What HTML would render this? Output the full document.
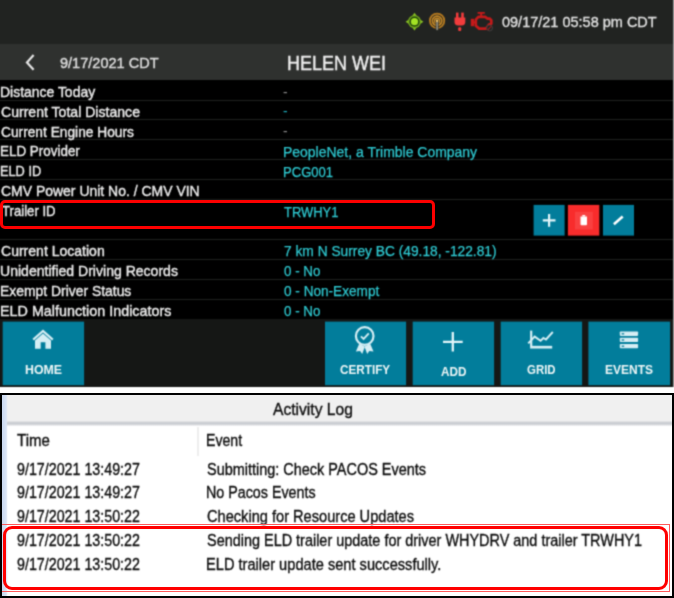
<!DOCTYPE html>
<html>
<head>
<meta charset="utf-8">
<title>ELD</title>
<style>
html,body{margin:0;padding:0;}
body{width:674px;height:598px;position:relative;overflow:hidden;background:#fff;font-family:"Liberation Sans",sans-serif;}
.abs{position:absolute;}
.blur{filter:url(#bl);}
#top{left:0;top:0;width:674px;height:391px;background:#fff;overflow:hidden;}
#loginner{left:2px;top:395px;width:670px;height:200.6px;background:#fff;overflow:hidden;}
#status{left:0;top:0;width:674px;height:44px;background:#212321;}
#header{left:0;top:44px;width:674px;height:36px;background:#2f312f;}
#rows{left:0;top:80px;width:674px;height:240px;background:#000;}
.sep{position:absolute;left:0;width:674px;height:1px;background:#1f211f;}
.t{position:absolute;white-space:nowrap;line-height:20px;height:20px;}
#bar{left:0;top:319px;width:674px;height:68px;background:#151715;}
.btn{position:absolute;top:321.5px;width:81.6px;height:63.7px;background:#027d9b;}
.sb{position:absolute;top:205px;width:31px;height:31px;background:#027d9b;}
</style>
</head>
<body>
<svg width="0" height="0" style="position:absolute"><filter id="bl" x="0" y="0" width="100%" height="100%" color-interpolation-filters="sRGB"><feConvolveMatrix order="3" kernelMatrix="0.0400 0.1200 0.0400 0.1200 0.3600 0.1200 0.0400 0.1200 0.0400" divisor="1" edgeMode="duplicate" preserveAlpha="true"/></filter></svg>
<div id="top" class="abs blur">
<div id="status" class="abs">
<svg class="abs" style="left:0;top:0" width="674" height="44" viewBox="0 0 674 44">
<g transform="translate(414.5 21.7)">
<path d="M0 -8.9 L2.3 -5.6 L-2.3 -5.6Z M0 8.9 L2.3 5.6 L-2.3 5.6Z M-8.9 0 L-5.6 2.3 L-5.6 -2.3Z M8.9 0 L5.6 2.3 L5.6 -2.3Z" fill="#8cc624"/>
<circle r="6.5" fill="#76aa1e"/>
<circle r="5.1" fill="#1f420c"/>
<circle r="3.6" fill="#a4e224"/>
</g>
<g transform="translate(437.1 20.8)" fill="none">
<circle r="7.2" stroke="#b87c20" stroke-width="1.8"/>
<circle r="4.7" stroke="#c88a26" stroke-width="1.7"/>
<circle r="2.5" stroke="#c88a26" stroke-width="1.4"/>
<rect x="-1.1" y="0" width="2.2" height="9.6" fill="#a8a494" stroke="#212321" stroke-width="0.8"/>
<circle r="1.3" fill="#f2c466"/>
</g>
<g fill="#f23c3c">
<rect x="456" y="12.6" width="2.5" height="6"/>
<rect x="461.2" y="12.6" width="2.6" height="6"/>
<path d="M454.5 17.4 H465.3 V22 Q465.3 25.4 461.6 25.4 H458.2 Q454.5 25.4 454.5 22Z"/>
<rect x="458.2" y="27.3" width="3" height="3.6" rx="1"/>
</g>
<g fill="none" stroke="#c41a1a" stroke-width="2.7" stroke-linejoin="round">
<path d="M477.6 12.9 H484.8" stroke-width="1.8"/><path d="M481.2 13 V16" stroke-width="2"/>
<path d="M475.8 19.6 L478.4 16.9 H485.4 L487.3 18.6 H489.6 L491.3 20.2 V23.8 L489 24.6 L486.2 28.6 H479.2 L475.8 25.8 Z"/>
<path d="M472.4 18.8 V26.2" stroke-width="3.2"/>
<path d="M472 22.4 H476" stroke-width="2.4"/>
</g>
<g transform="translate(489.6 28)">
<circle r="2.9" fill="#212321" stroke="#454040" stroke-width="1"/>
<path d="M-2 2 L2 -2" stroke="#8a2020" stroke-width="1.2"/>
</g>
</svg>
</div>
<div id="header" class="abs">
<svg class="abs" style="left:24px;top:9px" width="14" height="18" viewBox="0 0 14 18"><path d="M9.6 2 L3 9.4 L9.6 16.8" fill="none" stroke="#e6e6e6" stroke-width="2.2"/></svg>
</div>
<div id="rows" class="abs"></div>
<div class="sep" style="top:100px"></div>
<div class="sep" style="top:119px"></div>
<div class="sep" style="top:139px"></div>
<div class="sep" style="top:159px"></div>
<div class="sep" style="top:179px"></div>
<div class="sep" style="top:199px"></div>
<div class="sep" style="top:239px"></div>
<div class="sep" style="top:259px"></div>
<div class="sep" style="top:279px"></div>
<div class="sep" style="top:299px"></div>

<svg class="abs" style="left:530px;top:200px" width="110" height="40" viewBox="530 200 110 40">
<rect x="533.6" y="204.9" width="31" height="30.7" fill="#027d9b"/>
<rect x="567.9" y="204.9" width="31.4" height="30.7" fill="#f82c2c"/>
<rect x="575" y="211.8" width="17.8" height="17.6" fill="#f94040"/>
<rect x="603" y="204.9" width="31" height="30.7" fill="#027d9b"/>
<path d="M542.8 220.4 H555.5 M549.1 214 V226.8" stroke="#e4f6fa" stroke-width="2.2" fill="none"/>
<path d="M580.5 216.6 H587 V224.3 Q587 225.3 586 225.3 H581.5 Q580.5 225.3 580.5 224.3Z M582.3 215.1 H585.2 V216.2 H582.3Z" fill="#fff"/>
<path d="M613.9 224.2 L622.7 216.6" stroke="#fff" stroke-width="2.6" fill="none"/>
</svg>
<div id="bar" class="abs"></div>
<svg class="abs" style="left:0;top:319px" width="674" height="69" viewBox="0 319 674 69">
<g fill="#027d9b">
<rect x="2.7" y="321.6" width="81.4" height="63.6"/>
<rect x="325" y="321.6" width="81.1" height="63.6"/>
<rect x="412.7" y="321.6" width="81.4" height="63.6"/>
<rect x="500.7" y="321.6" width="81.4" height="63.6"/>
<rect x="588.4" y="321.6" width="81.7" height="63.6"/>
</g>
<!-- home -->
<g fill="#d6eef4">
<path d="M33.2 339.6 L43 331 L52.8 339.6" fill="none" stroke="#d6eef4" stroke-width="2.2"/>
<path d="M35 340.6 L43 333.6 L51 340.6 V348.7 H45.4 V342.2 H40.7 V348.7 H35Z"/>
</g>
<!-- certify -->
<g fill="none" stroke="#d6eef4">
<circle cx="364.7" cy="336" r="8.8" stroke-width="2.2"/>
<path d="M360.9 336.4 L363.6 339 L368.8 333.4" stroke-width="1.9"/>
</g>
<path d="M359.2 343.8 L355.9 351.5 L360.1 350.9 L362.2 354 L365 346.6 Z M370.2 343.8 L373.5 351.5 L369.3 350.9 L367.2 354 L364.4 346.6 Z" fill="#d6eef4"/>
<!-- add -->
<path d="M443 341.8 H462.7 M452.8 332 V351.5" stroke="#e4f6fa" stroke-width="2.3" fill="none"/>
<!-- grid -->
<g fill="none" stroke="#d6eef4">
<path d="M531.2 330.6 V346" stroke-width="2.2"/>
<path d="M530.1 347.2 H552.2" stroke-width="2.7"/>
<path d="M528.2 343.4 L534.7 336.6 L540.6 340.7 L543.4 338 L546 339.5 L552.8 332" stroke-width="1.9"/>
</g>
<!-- events -->
<g fill="#d6eef4">
<rect x="619.8" y="331.4" width="18.3" height="4.5" rx="0.8"/>
<rect x="619.8" y="337.7" width="18.3" height="4.4" rx="0.8"/>
<rect x="619.8" y="344" width="18.3" height="4.2" rx="0.8"/>
</g>
<g fill="#2b93ac">
<rect x="621.6" y="333" width="2.6" height="1.6"/>
<rect x="621.6" y="339.2" width="2.6" height="1.6"/>
<rect x="621.6" y="345.4" width="2.6" height="1.6"/>
</g>
</svg>
<div class="abs" style="left:673.1px;top:0;width:2px;height:387px;background:#a2a2a2"></div>
<div class="t" style="left:0.06px;top:81.70px;font-size:14.8px;letter-spacing:0.000px;color:#ececec;font-weight:400;transform:scaleX(0.9428);transform-origin:0 0;-webkit-text-stroke:0.4px #ececec;">Distance Today</div>
<div class="t" style="left:1.00px;top:101.62px;font-size:14.8px;letter-spacing:0.000px;color:#ececec;font-weight:400;transform:scaleX(0.9510);transform-origin:0 0;-webkit-text-stroke:0.4px #ececec;">Current Total Distance</div>
<div class="t" style="left:1.00px;top:121.54px;font-size:14.8px;letter-spacing:0.000px;color:#ececec;font-weight:400;transform:scaleX(0.9285);transform-origin:0 0;-webkit-text-stroke:0.4px #ececec;">Current Engine Hours</div>
<div class="t" style="left:0.09px;top:141.46px;font-size:14.8px;letter-spacing:0.000px;color:#ececec;font-weight:400;transform:scaleX(0.9074);transform-origin:0 0;-webkit-text-stroke:0.4px #ececec;">ELD Provider</div>
<div class="t" style="left:0.14px;top:161.38px;font-size:14.8px;letter-spacing:0.000px;color:#ececec;font-weight:400;transform:scaleX(0.8629);transform-origin:0 0;-webkit-text-stroke:0.4px #ececec;">ELD ID</div>
<div class="t" style="left:1.00px;top:181.30px;font-size:14.8px;letter-spacing:0.000px;color:#ececec;font-weight:400;transform:scaleX(0.9438);transform-origin:0 0;-webkit-text-stroke:0.4px #ececec;">CMV Power Unit No. / CMV VIN</div>
<div class="t" style="left:2.00px;top:201.22px;font-size:14.8px;letter-spacing:0.000px;color:#ececec;font-weight:400;transform:scaleX(0.8893);transform-origin:0 0;-webkit-text-stroke:0.4px #ececec;">Trailer ID</div>
<div class="t" style="left:1.00px;top:241.06px;font-size:14.8px;letter-spacing:0.000px;color:#ececec;font-weight:400;transform:scaleX(0.9481);transform-origin:0 0;-webkit-text-stroke:0.4px #ececec;">Current Location</div>
<div class="t" style="left:0.05px;top:260.98px;font-size:14.8px;letter-spacing:0.000px;color:#ececec;font-weight:400;transform:scaleX(0.9489);transform-origin:0 0;-webkit-text-stroke:0.4px #ececec;">Unidentified Driving Records</div>
<div class="t" style="left:0.06px;top:280.90px;font-size:14.8px;letter-spacing:0.000px;color:#ececec;font-weight:400;transform:scaleX(0.9394);transform-origin:0 0;-webkit-text-stroke:0.4px #ececec;">Exempt Driver Status</div>
<div class="t" style="left:0.03px;top:300.82px;font-size:14.8px;letter-spacing:0.000px;color:#ececec;font-weight:400;transform:scaleX(0.9691);transform-origin:0 0;-webkit-text-stroke:0.4px #ececec;">ELD Malfunction Indicators</div>
<div class="t" style="left:282.71px;top:141.76px;font-size:14.1px;letter-spacing:0.000px;color:#2fcad2;font-weight:400;transform:scaleX(0.9911);transform-origin:0 0;-webkit-text-stroke:0.25px #2fcad2;">PeopleNet, a Trimble Company</div>
<div class="t" style="left:282.77px;top:161.68px;font-size:14.1px;letter-spacing:0.000px;color:#2fcad2;font-weight:400;transform:scaleX(0.9264);transform-origin:0 0;-webkit-text-stroke:0.25px #2fcad2;">PCG001</div>
<div class="t" style="left:283.90px;top:201.52px;font-size:14.1px;letter-spacing:0.000px;color:#2fcad2;font-weight:400;transform:scaleX(0.9173);transform-origin:0 0;-webkit-text-stroke:0.25px #2fcad2;">TRWHY1</div>
<div class="t" style="left:283.90px;top:241.36px;font-size:14.1px;letter-spacing:0.000px;color:#2fcad2;font-weight:400;transform:scaleX(0.9762);transform-origin:0 0;-webkit-text-stroke:0.25px #2fcad2;">7 km N Surrey BC (49.18, -122.81)</div>
<div class="t" style="left:283.70px;top:261.28px;font-size:14.1px;letter-spacing:0.000px;color:#2fcad2;font-weight:400;transform:scaleX(0.9470);transform-origin:0 0;-webkit-text-stroke:0.25px #2fcad2;">0 - No</div>
<div class="t" style="left:283.70px;top:281.20px;font-size:14.1px;letter-spacing:0.000px;color:#2fcad2;font-weight:400;transform:scaleX(0.9648);transform-origin:0 0;-webkit-text-stroke:0.25px #2fcad2;">0 - Non-Exempt</div>
<div class="t" style="left:283.70px;top:301.12px;font-size:14.1px;letter-spacing:0.000px;color:#2fcad2;font-weight:400;transform:scaleX(0.9470);transform-origin:0 0;-webkit-text-stroke:0.25px #2fcad2;">0 - No</div>
<div class="t" style="left:283.00px;top:82.50px;font-size:13.8px;letter-spacing:0.000px;color:#8c8c8c;font-weight:400;">-</div>
<div class="t" style="left:283.00px;top:102.42px;font-size:13.8px;letter-spacing:0.000px;color:#1fb0c0;font-weight:400;">-</div>
<div class="t" style="left:283.00px;top:122.34px;font-size:13.8px;letter-spacing:0.000px;color:#8c8c8c;font-weight:400;">-</div>
<div class="t" style="left:502.40px;top:12.20px;font-size:15.2px;letter-spacing:0.000px;color:#e0e0e0;font-weight:400;transform:scaleX(0.9542);transform-origin:0 0;-webkit-text-stroke:0.35px #e0e0e0;">09/17/21 05:58 pm CDT</div>
<div class="t" style="left:60.20px;top:53.10px;font-size:15.4px;letter-spacing:0.000px;color:#dcdcdc;font-weight:400;transform:scaleX(0.9440);transform-origin:0 0;-webkit-text-stroke:0.45px #dcdcdc;">9/17/2021 CDT</div>
<div class="t" style="left:287.37px;top:53.00px;font-size:19.4px;letter-spacing:0.000px;color:#f0f0f0;font-weight:400;transform:scaleX(0.9273);transform-origin:0 0;-webkit-text-stroke:0.35px #f0f0f0;">HELEN WEI</div>
<div class="t" style="left:25.10px;top:359.50px;font-size:13.6px;letter-spacing:0.000px;color:#eef6f6;font-weight:700;transform:scaleX(0.9088);transform-origin:0 0;">HOME</div>
<div class="t" style="left:340.00px;top:359.60px;font-size:13.6px;letter-spacing:0.000px;color:#eef6f6;font-weight:700;transform:scaleX(0.8625);transform-origin:0 0;">CERTIFY</div>
<div class="t" style="left:440.70px;top:361.90px;font-size:13.6px;letter-spacing:0.000px;color:#eef6f6;font-weight:700;transform:scaleX(0.8639);transform-origin:0 0;">ADD</div>
<div class="t" style="left:526.70px;top:359.60px;font-size:13.6px;letter-spacing:0.000px;color:#eef6f6;font-weight:700;transform:scaleX(0.8400);transform-origin:0 0;">GRID</div>
<div class="t" style="left:605.40px;top:359.60px;font-size:13.6px;letter-spacing:0.000px;color:#eef6f6;font-weight:700;transform:scaleX(0.8836);transform-origin:0 0;">EVENTS</div>

</div>
<div class="abs" style="left:-0.4px;top:200.4px;width:434.9px;height:28.3px;box-sizing:border-box;border:3.5px solid #fd0000;border-radius:5px;"></div>
<div id="loginner" class="abs blur"><div class="abs" style="left:-2px;top:-395px;width:674px;height:598px">
<div class="abs" style="left:0;top:393px;width:674px;height:28px;background:#f0f0f0"></div>
<div class="abs" style="left:2px;top:395px;width:4.5px;height:201px;background:linear-gradient(90deg,#c9d8f0,#dde6f5)"></div>
<div class="abs" style="left:6.5px;top:420.6px;width:665.5px;height:5.6px;background:linear-gradient(#ebebec,#c9ccd1 35%,#c9ccd1 60%,#f6f6f8)"></div>
<div class="abs" style="left:197px;top:427px;width:1.6px;height:29px;background:#eeeeee"></div>
<div class="t" style="left:273.00px;top:399.00px;font-size:16.3px;letter-spacing:0.000px;color:#0c0c0c;font-weight:400;transform:scaleX(0.9587);transform-origin:0 0;-webkit-text-stroke:0.35px #0c0c0c;">Activity Log</div>
<div class="t" style="left:17.00px;top:429.70px;font-size:16.3px;letter-spacing:0.000px;color:#0c0c0c;font-weight:400;transform:scaleX(0.9234);transform-origin:0 0;-webkit-text-stroke:0.35px #0c0c0c;">Time</div>
<div class="t" style="left:205.73px;top:429.70px;font-size:16.3px;letter-spacing:0.000px;color:#0c0c0c;font-weight:400;transform:scaleX(0.8684);transform-origin:0 0;-webkit-text-stroke:0.35px #0c0c0c;">Event</div>
<div class="t" style="left:16.60px;top:458.60px;font-size:16.3px;letter-spacing:0.000px;color:#0c0c0c;font-weight:400;transform:scaleX(0.8761);transform-origin:0 0;-webkit-text-stroke:0.35px #0c0c0c;">9/17/2021 13:49:27</div>
<div class="t" style="left:206.80px;top:458.60px;font-size:16.3px;letter-spacing:0.000px;color:#0c0c0c;font-weight:400;transform:scaleX(0.8877);transform-origin:0 0;-webkit-text-stroke:0.35px #0c0c0c;">Submitting: Check PACOS Events</div>
<div class="t" style="left:16.60px;top:482.20px;font-size:16.3px;letter-spacing:0.000px;color:#0c0c0c;font-weight:400;transform:scaleX(0.8761);transform-origin:0 0;-webkit-text-stroke:0.35px #0c0c0c;">9/17/2021 13:49:27</div>
<div class="t" style="left:205.92px;top:482.20px;font-size:16.3px;letter-spacing:0.000px;color:#0c0c0c;font-weight:400;transform:scaleX(0.8776);transform-origin:0 0;-webkit-text-stroke:0.35px #0c0c0c;">No Pacos Events</div>
<div class="t" style="left:16.60px;top:506.20px;font-size:16.3px;letter-spacing:0.000px;color:#0c0c0c;font-weight:400;transform:scaleX(0.8761);transform-origin:0 0;-webkit-text-stroke:0.35px #0c0c0c;">9/17/2021 13:50:22</div>
<div class="t" style="left:206.80px;top:506.20px;font-size:16.3px;letter-spacing:0.000px;color:#0c0c0c;font-weight:400;transform:scaleX(0.8971);transform-origin:0 0;-webkit-text-stroke:0.35px #0c0c0c;">Checking for Resource Updates</div>
<div class="t" style="left:16.60px;top:530.10px;font-size:16.3px;letter-spacing:0.000px;color:#0c0c0c;font-weight:400;transform:scaleX(0.8761);transform-origin:0 0;-webkit-text-stroke:0.35px #0c0c0c;">9/17/2021 13:50:22</div>
<div class="t" style="left:206.80px;top:530.10px;font-size:16.3px;letter-spacing:0.000px;color:#0c0c0c;font-weight:400;transform:scaleX(0.8869);transform-origin:0 0;-webkit-text-stroke:0.35px #0c0c0c;">Sending ELD trailer update for driver WHYDRV and trailer TRWHY1</div>
<div class="t" style="left:16.60px;top:554.20px;font-size:16.3px;letter-spacing:0.000px;color:#0c0c0c;font-weight:400;transform:scaleX(0.8761);transform-origin:0 0;-webkit-text-stroke:0.35px #0c0c0c;">9/17/2021 13:50:22</div>
<div class="t" style="left:205.90px;top:554.20px;font-size:16.3px;letter-spacing:0.000px;color:#0c0c0c;font-weight:400;transform:scaleX(0.8979);transform-origin:0 0;-webkit-text-stroke:0.35px #0c0c0c;">ELD trailer update sent successfully.</div>

</div></div>
<div class="abs" style="left:0;top:524px;width:669.5px;height:68px;box-sizing:border-box;border:1px solid #ff5a5a;"></div>
<div class="abs" style="left:0;top:393px;width:674px;height:205px;box-sizing:border-box;border:2px solid #000;border-bottom-width:2.5px;border-top-width:2.2px"></div>
<div class="abs" style="left:3.4px;top:526.3px;width:664.4px;height:63.8px;box-sizing:border-box;border:3.1px solid #ff0000;border-radius:9px;"></div>

</body>
</html>
